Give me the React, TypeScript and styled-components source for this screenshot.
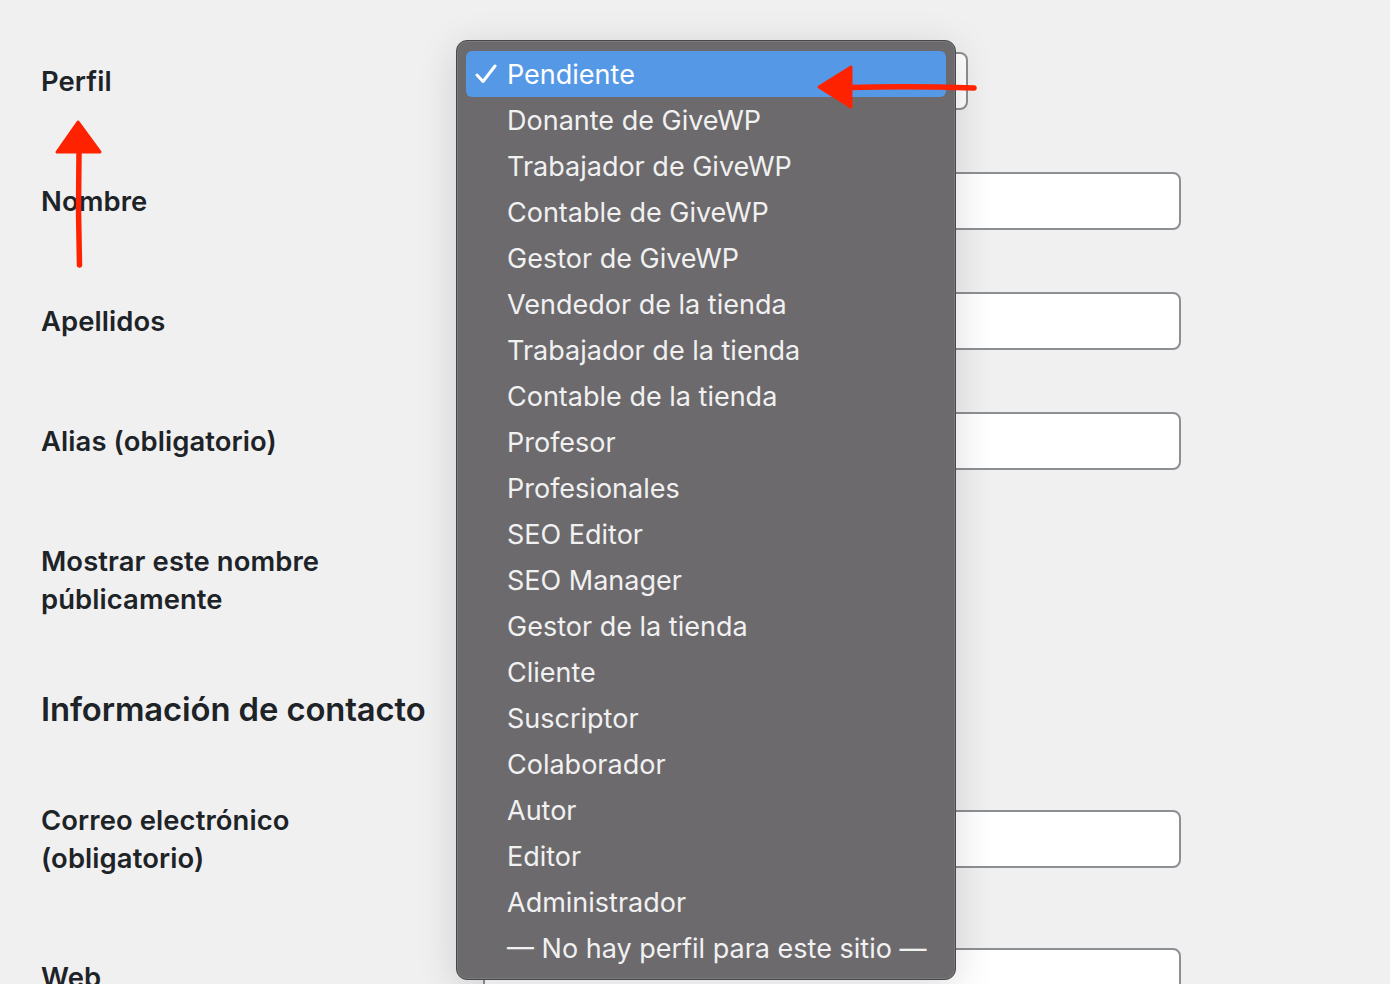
import React from "react";
import styled, { createGlobalStyle } from "styled-components";

const Global = createGlobalStyle`
  html, body { margin: 0; padding: 0; }
  body {
    background: #f0f0f1;
    font-family: Inter, "Noto Sans", "Liberation Sans", sans-serif;
    color: #1d2327;
    overflow: hidden;
  }
`;

const Page = styled.div`
  position: relative;
  width: 1390px;
  height: 984px;
  overflow: hidden;
  box-sizing: border-box;
  padding: 21px 0 0 41px;
`;

const Row = styled.div<{ $h: number }>`
  display: grid;
  grid-template-columns: 442px 698px;
  align-items: center;
  height: ${(p) => p.$h}px;
`;

const Label = styled.div`
  font-size: 27.4px;
  font-weight: 600;
  line-height: 38px;
  letter-spacing: 0.1px;
`;

const Heading = styled.h2`
  margin: 0;
  font-size: 32.8px;
  font-weight: 600;
  line-height: 40px;
  letter-spacing: -0.1px;
`;

const Field = styled.div`
  box-sizing: border-box;
  height: 58px;
  background: #fff;
  border: 2px solid #8c8f94;
  border-radius: 8px;
`;

const SelectBox = styled(Field)<{ $w: number }>`
  width: ${(p) => p.$w}px;
`;

const Menu = styled.div`
  position: absolute;
  left: 456px;
  top: 40px;
  width: 500px;
  height: 940px;
  box-sizing: border-box;
  padding: 10px 9px;
  background: #6c6a6d;
  border: 1px solid #48474a;
  border-radius: 11px;
  box-shadow: inset 0 0 0 1px rgba(255, 255, 255, 0.1),
    0 8px 40px rgba(0, 0, 0, 0.14);
  display: flex;
  flex-direction: column;
`;

const Item = styled.div<{ $active?: boolean }>`
  position: relative;
  height: 46px;
  flex: none;
  display: flex;
  align-items: center;
  padding-left: 41px;
  border-radius: 6px;
  font-size: 27px;
  font-weight: 400;
  letter-spacing: 0;
  color: ${(p) => (p.$active ? "#ffffff" : "#f1f1f1")};
  background: ${(p) => (p.$active ? "#5598e6" : "transparent")};
  white-space: nowrap;
`;

const Check = styled.svg`
  position: absolute;
  left: 9px;
  top: 13px;
`;

const Annotations = styled.svg`
  position: absolute;
  left: 0;
  top: 0;
  pointer-events: none;
`;

const options = [
  "Pendiente",
  "Donante de GiveWP",
  "Trabajador de GiveWP",
  "Contable de GiveWP",
  "Gestor de GiveWP",
  "Vendedor de la tienda",
  "Trabajador de la tienda",
  "Contable de la tienda",
  "Profesor",
  "Profesionales",
  "SEO Editor",
  "SEO Manager",
  "Gestor de la tienda",
  "Cliente",
  "Suscriptor",
  "Colaborador",
  "Autor",
  "Editor",
  "Administrador",
  "— No hay perfil para este sitio —",
];

export default function App() {
  return (
    <>
      <Global />
      <Page>
        <Row $h={120}>
          <Label>Perfil</Label>
          <SelectBox $w={485} />
        </Row>
        <Row $h={120}>
          <Label>Nombre</Label>
          <Field />
        </Row>
        <Row $h={120}>
          <Label>Apellidos</Label>
          <Field />
        </Row>
        <Row $h={120}>
          <Label>Alias (obligatorio)</Label>
          <Field />
        </Row>
        <Row $h={158}>
          <Label>
            Mostrar este nombre
            <br />
            públicamente
          </Label>
          <SelectBox $w={420} />
        </Row>
        <Row $h={100}>
          <Heading>Información de contacto</Heading>
        </Row>
        <Row $h={160}>
          <Label>
            Correo electrónico
            <br />
            (obligatorio)
          </Label>
          <Field />
        </Row>
        <Row $h={116}>
          <Label>Web</Label>
          <Field />
        </Row>

        <Menu>
          {options.map((o, i) => (
            <Item key={o} $active={i === 0}>
              {i === 0 && (
                <Check width={22} height={20} viewBox="0 0 22 20">
                  <path
                    d="M2 11 L8 17.5 L20 2"
                    fill="none"
                    stroke="#ffffff"
                    strokeWidth={3}
                    strokeLinecap="round"
                    strokeLinejoin="round"
                  />
                </Check>
              )}
              {o}
            </Item>
          ))}
        </Menu>

        <Annotations width={1390} height={984} viewBox="0 0 1390 984">
          <g fill="#ff2200" stroke="#ff2200" strokeLinejoin="round">
            <path d="M79 153 L78.5 210 L79.5 265" strokeWidth={5.5} fill="none" strokeLinecap="round" />
            <path d="M78 122 L57 152 L100 152 Z" strokeWidth={3} />
            <path d="M850 87.5 Q910 86 974 88" strokeWidth={5.5} fill="none" strokeLinecap="round" />
            <path d="M819 87 L851 67 L851 107 Z" strokeWidth={3} />
          </g>
        </Annotations>
      </Page>
    </>
  );
}
